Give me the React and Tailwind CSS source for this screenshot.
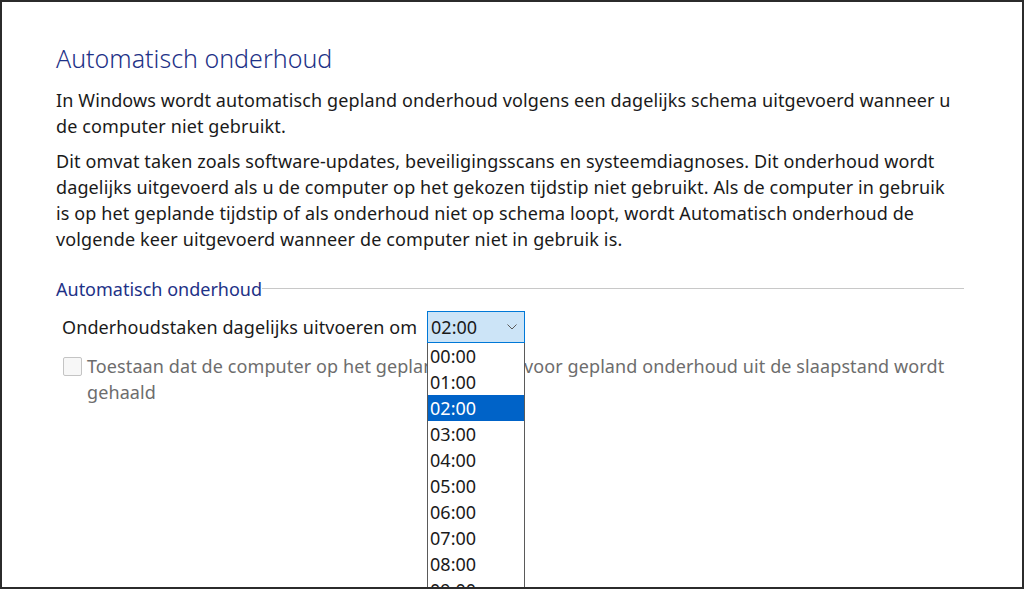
import React from 'react';

const hours = ['00:00', '01:00', '02:00', '03:00', '04:00', '05:00', '06:00', '07:00', '08:00', '09:00', '10:00'];

export default function App() {
  return (
    <div className="w-[1024px] h-[589px] border-2 border-[#2b2b2b] bg-white overflow-hidden font-['Noto_Sans',sans-serif] text-[#1a1a1a]">
      <div className="relative h-full pl-[54px] pt-[40px] pr-[58px]">
        <h1 className="text-[25px] leading-[32px] font-light text-[#1e3287]">Automatisch onderhoud</h1>

        <p className="mt-[13px] text-[18px] leading-[26px] tracking-[0.12px] whitespace-nowrap">
          In Windows wordt automatisch gepland onderhoud volgens een dagelijks schema uitgevoerd wanneer u
          <br />
          de computer niet gebruikt.
        </p>
        <p className="mt-[9px] text-[18px] leading-[26px] tracking-[0.12px] whitespace-nowrap">
          Dit omvat taken zoals software-updates, beveiligingsscans en systeemdiagnoses. Dit onderhoud wordt
          <br />
          dagelijks uitgevoerd als u de computer op het gekozen tijdstip niet gebruikt. Als de computer in gebruik
          <br />
          is op het geplande tijdstip of als onderhoud niet op schema loopt, wordt Automatisch onderhoud de
          <br />
          volgende keer uitgevoerd wanneer de computer niet in gebruik is.
        </p>

        {/* section header */}
        <div className="mt-[25px] flex items-center">
          <span className="text-[18px] leading-[24px] text-[#1e3287]">Automatisch onderhoud</span>
          <div className="flex-1 h-px bg-[#c8c8c8] mt-[-2px]" />
        </div>

        <div className="mt-[10px] pl-[6px] flex items-center">
          <span className="text-[18px] leading-[32px] tracking-[0.1px]">Onderhoudstaken dagelijks uitvoeren om</span>
          <div className="relative ml-[10px]">
            <div className="w-[98px] h-[32px] border border-[#0078d7] bg-[#cce4f7] flex items-center justify-between pl-[3px] pr-[7px]">
              <span className="text-[18px]">02:00</span>
              <svg width="10" height="6" viewBox="0 0 10 6" fill="none" stroke="#5a5a5a" strokeWidth="1">
                <path d="M0.5 0.5 L5 5 L9.5 0.5" />
              </svg>
            </div>
            <div className="absolute left-0 top-[32px] w-[98px] z-10 bg-white border border-[#5a5a5a] border-t-0">
              {hours.map((h) => (
                <div
                  key={h}
                  className={`h-[26px] pl-[2px] text-[18px] leading-[26px] ${h === '02:00' ? 'bg-[#0063c8] text-white' : 'text-[#1a1a1a]'}`}
                >
                  {h}
                </div>
              ))}
            </div>
          </div>
        </div>

        <div className="mt-[10px] pl-[7px] flex items-start gap-[5px] text-[#6d6d6d]">
          <div className="mt-[4px] w-[19px] h-[19px] border border-[#c4c4c4] rounded-[2px] bg-[#f7f7f7] shrink-0" />
          <span className="text-[18px] leading-[26px] tracking-[0.1px] whitespace-nowrap">
            Toestaan dat de computer op het geplande tijdstip voor gepland onderhoud uit de slaapstand wordt
            <br />
            gehaald
          </span>
        </div>
      </div>
    </div>
  );
}
